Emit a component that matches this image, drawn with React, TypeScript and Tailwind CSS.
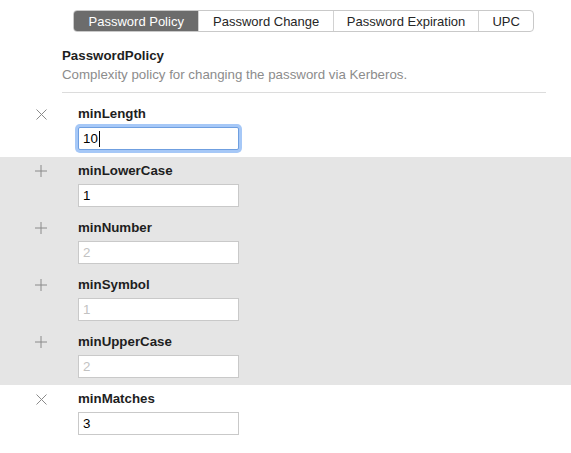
import React from "react";

const font = { fontFamily: '"Liberation Sans", Arial, sans-serif' };

function XIcon() {
  return (
    <svg width="11" height="11" viewBox="0 0 11 11" className="block">
      <path d="M0.5 0.5 L10.5 10.5 M10.5 0.5 L0.5 10.5" stroke="#8a8a8a" strokeWidth="1" fill="none" />
    </svg>
  );
}

function PlusIcon() {
  return (
    <svg width="12" height="12" viewBox="0 0 12 12" className="block">
      <path d="M6 0 L6 12 M0 6 L12 6" stroke="#8a8a8a" strokeWidth="1" fill="none" />
    </svg>
  );
}

type Row = { name: string; value: string; set: boolean; focus?: boolean };

const rows: Row[] = [
  { name: "minLength", value: "10", set: true, focus: true },
  { name: "minLowerCase", value: "1", set: true },
  { name: "minNumber", value: "2", set: false },
  { name: "minSymbol", value: "1", set: false },
  { name: "minUpperCase", value: "2", set: false },
  { name: "minMatches", value: "3", set: true },
];

function FieldRow({ row, icon }: { row: Row; icon: "x" | "plus" }) {
  return (
    <div className="flex h-[57px]">
      <div className="w-[78px] pl-[35px] pt-[8px]">
        <div className="w-[12px] h-[12px] flex items-center justify-center">
          {icon === "x" ? <XIcon /> : <PlusIcon />}
        </div>
      </div>
      <div className="flex flex-col">
        <div className="h-[16px] mt-[6px] text-[13.3px] leading-[16px] font-bold text-[#1e1e1e]">{row.name}</div>
        <div
          className={
            "mt-[5px] w-[161px] h-[23px] bg-white flex items-center pl-[4px] text-[13.3px] " +
            (row.focus
              ? "border border-[#6f9fe0] rounded-[2px] shadow-[0_0_0_3px_#a6c8f7]"
              : "border border-[#c9c9c9]") +
            (row.set ? " text-black" : " text-[#c2c2c2]")
          }
        >
          <span>{row.value}</span>
          {row.focus && <span className="inline-block w-px h-[16px] bg-black ml-px" />}
        </div>
      </div>
    </div>
  );
}

export default function App() {
  const tabs = [
    { label: "Password Policy", w: "w-[125px]" },
    { label: "Password Change", w: "w-[135px]" },
    { label: "Password Expiration", w: "w-[146px]" },
    { label: "UPC", w: "w-[55px]" },
  ];
  return (
    <div className="w-[571px] h-[453px] bg-white overflow-hidden" style={font}>
      <div className="pt-[10px] pl-[73px]">
        <div className="flex h-[22px] w-[461px] rounded-[4px] border border-[#c9c9c9] overflow-hidden bg-white">
          {tabs.map((t, i) => (
            <div
              key={t.label}
              className={
                t.w +
                " flex items-center justify-center pt-px text-[13px] " +
                (i === 0 ? "bg-[#6c6c6c] text-white" : "text-[#262626]") +
                (i > 0 ? " border-l border-[#d2d2d2]" : "")
              }
            >
              {t.label}
            </div>
          ))}
        </div>
      </div>
      <div className="pl-[62px] pr-[25px] pt-[15px]">
        <div className="text-[13.3px] leading-[18px] font-bold text-[#1e1e1e]">PasswordPolicy</div>
        <div className="text-[13.3px] leading-[18px] text-[#8c8c8c] mt-px">
          Complexity policy for changing the password via Kerberos.
        </div>
        <div className="mt-[8px] h-px bg-[#dcdcdc]" />
      </div>
      <div className="mt-[7px]">
        <FieldRow row={rows[0]} icon="x" />
        <div className="bg-[#e5e5e5]">
          {rows.slice(1, 5).map((r) => (
            <FieldRow key={r.name} row={r} icon="plus" />
          ))}
        </div>
        <FieldRow row={rows[5]} icon="x" />
      </div>
    </div>
  );
}
